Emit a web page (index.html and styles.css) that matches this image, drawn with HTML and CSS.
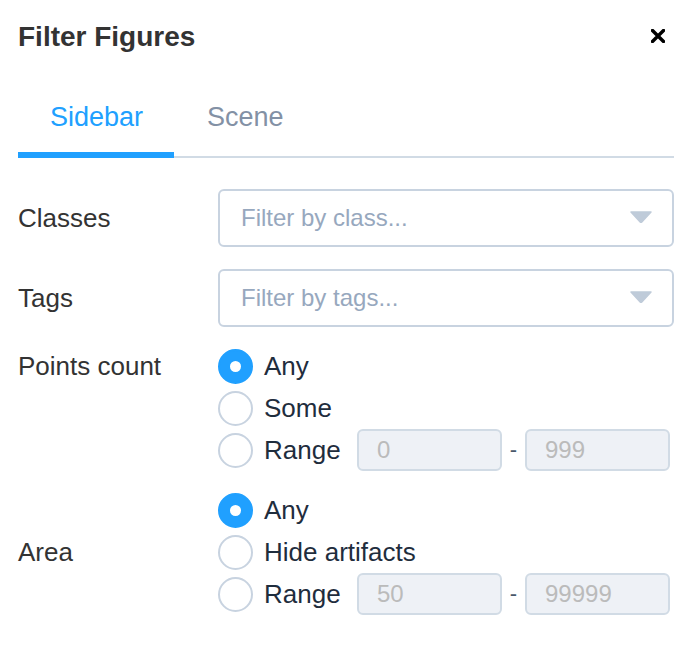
FILE: index.html
```html
<!DOCTYPE html>
<html lang="en">
<head>
<meta charset="utf-8">
<title>Filter Figures</title>
<link rel="stylesheet" href="styles.css">
</head>
<body>
<div class="dialog">
  <div class="header">
    <h1 class="title">Filter Figures</h1>
    <button class="close" aria-label="Close">
      <svg width="14" height="14" viewBox="0 0 14 14"><path d="M1.5 1.5 L12.5 12.5 M12.5 1.5 L1.5 12.5" stroke="#000" stroke-width="3.4" stroke-linecap="square" fill="none"/></svg>
    </button>
  </div>

  <div class="tabs">
    <div class="tab active">Sidebar</div>
    <div class="tab">Scene</div>
  </div>

  <div class="form">
    <div class="row row-select">
      <div class="label">Classes</div>
      <div class="select">
        <span>Filter by class...</span>
        <svg class="arrow" width="22" height="12" viewBox="0 0 22 12"><path d="M1 1 L21 1 L11.8 11 Q11 11.8 10.2 11 Z" fill="#bfcbd9" stroke="#bfcbd9" stroke-width="1.5" stroke-linejoin="round"/></svg>
      </div>
    </div>
    <div class="row row-select">
      <div class="label">Tags</div>
      <div class="select">
        <span>Filter by tags...</span>
        <svg class="arrow" width="22" height="12" viewBox="0 0 22 12"><path d="M1 1 L21 1 L11.8 11 Q11 11.8 10.2 11 Z" fill="#bfcbd9" stroke="#bfcbd9" stroke-width="1.5" stroke-linejoin="round"/></svg>
      </div>
    </div>

    <div class="row row-radio">
      <div class="label label-top">Points count</div>
      <div class="radio-group">
        <div class="radio-row"><span class="radio checked"></span><span class="radio-label">Any</span></div>
        <div class="radio-row"><span class="radio"></span><span class="radio-label">Some</span></div>
        <div class="radio-row">
          <span class="radio"></span><span class="radio-label">Range</span>
          <div class="range">
            <input class="range-input" type="text" value="0" disabled>
            <span class="dash">-</span>
            <input class="range-input" type="text" value="999" disabled>
          </div>
        </div>
      </div>
    </div>

    <div class="row row-radio">
      <div class="label">Area</div>
      <div class="radio-group">
        <div class="radio-row"><span class="radio checked"></span><span class="radio-label">Any</span></div>
        <div class="radio-row"><span class="radio"></span><span class="radio-label">Hide artifacts</span></div>
        <div class="radio-row">
          <span class="radio"></span><span class="radio-label">Range</span>
          <div class="range">
            <input class="range-input" type="text" value="50" disabled>
            <span class="dash">-</span>
            <input class="range-input" type="text" value="99999" disabled>
          </div>
        </div>
      </div>
    </div>
  </div>
</div>
</body>
</html>
```

FILE: styles.css
```css
* {
  box-sizing: border-box;
}

body {
  margin: 0;
  background: #fff;
  font-family: "Liberation Sans", Arial, Helvetica, sans-serif;
}

.dialog {
  padding: 19px 18px 0;
}

.header {
  display: flex;
  align-items: center;
  justify-content: space-between;
  height: 36px;
}

.title {
  margin: 0;
  font-size: 28px;
  line-height: 36px;
  font-weight: bold;
  color: #333;
}

.close {
  border: 0;
  padding: 0;
  background: none;
  width: 14px;
  height: 14px;
  margin-right: 9px;
  margin-top: -3px;
  display: flex;
}

.tabs {
  margin-top: 47px;
  display: flex;
  border-bottom: 2px solid #d1dbe5;
}

.tab {
  padding: 0 32px 20px 33px;
  font-size: 27px;
  line-height: 30px;
  color: #8391a5;
  margin-bottom: -2px;
  border-bottom: 6px solid transparent;
}

.tab.active {
  color: #20a0ff;
  border-bottom-color: #20a0ff;
  padding: 0 31px 20px 32px;
}

.form {
  margin-top: 31px;
  display: flex;
  flex-direction: column;
}

.row {
  display: flex;
  align-items: center;
}

.row-select + .row-select {
  margin-top: 22px;
}

.row-radio {
  margin-top: 18px;
}

.label {
  width: 200px;
  flex: none;
  font-size: 26px;
  line-height: 30px;
  color: #333;
}

.label-top {
  align-self: flex-start;
  line-height: 42px;
}

.select {
  flex: 1;
  height: 58px;
  border: 2px solid #c8d3e0;
  border-radius: 6px;
  display: flex;
  align-items: center;
  justify-content: space-between;
  padding: 0 20px 0 21px;
  font-size: 24px;
  color: #97a8be;
}

.arrow {
  display: block;
  margin-top: -2px;
}

.radio-group {
  flex: 1;
  display: flex;
  flex-direction: column;
}

.radio-row {
  height: 42px;
  display: flex;
  align-items: center;
}

.radio {
  width: 35px;
  height: 35px;
  flex: none;
  border: 2px solid #c8d3e0;
  border-radius: 50%;
  display: flex;
  align-items: center;
  justify-content: center;
  background: #fff;
}

.radio.checked {
  background: #20a0ff;
  border-color: #20a0ff;
}

.radio.checked::after {
  content: "";
  width: 11px;
  height: 11px;
  border-radius: 50%;
  background: #fff;
}

.radio-label {
  margin-left: 11px;
  font-size: 26px;
  line-height: 30px;
  color: #1f2d3d;
}

.range {
  margin-left: auto;
  margin-right: 4px;
  display: flex;
  align-items: center;
}

.range-input {
  width: 145px;
  height: 42px;
  margin: 0;
  background: #eef1f6;
  border: 2px solid #d1dbe5;
  border-radius: 6px;
  padding: 0 0 0 18px;
  font-family: inherit;
  font-size: 24px;
  color: #bbb;
  -webkit-text-fill-color: #bbb;
  opacity: 1;
}

.dash {
  width: 23px;
  text-align: center;
  font-size: 22px;
  color: #48576a;
}
```
